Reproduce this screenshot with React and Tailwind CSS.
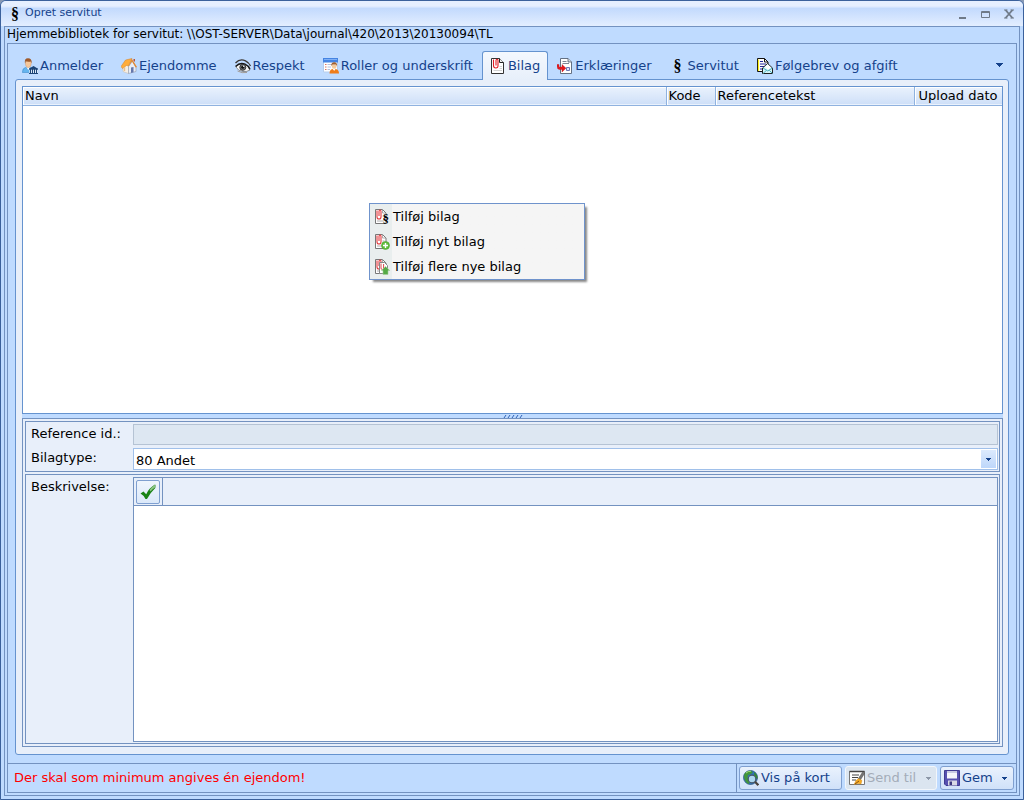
import React from "react";

const Section = () => (
  <span aria-hidden="true" className="flex h-4 w-4 shrink-0 items-center justify-center font-['Liberation_Serif',serif] text-[16px] leading-4 font-bold text-black">§</span>
);

const Icon = ({ children }) => (
  <svg aria-hidden="true" viewBox="0 0 16 16" className="h-4 w-4 shrink-0">{children}</svg>
);

const PersonIcon = () => (
  <Icon>
    <path d="M.4 14.500q0-4.500 3-5l2.600.6 3-.6q2 .5 2 3v2z" fill="#66b5ee" stroke="#3583c4" strokeWidth=".5" />
    <path d="M4.500 9.200h3.500l-1.700 2.800z" fill="#fff" />
    <path d="M3.300 4q0 5.500 3 5.500T9.300 4q-3-3-6 0z" fill="#f6c79b" stroke="#c68a57" strokeWidth=".4" />
    <path d="M3 5.500Q2 .4 6 .3q4 0 3.700 5L8.800 3.400Q6 4 3.800 3.200z" fill="#a05a2a" />
    <path d="M7 10.700L11.500 8l4.500 2.700v.8H7z" fill="#1d4576" />
    <path d="M7.300 11h8.500v4.500H7.300z" fill="#dce9f7" />
    <path d="M8.500 11v4M10.500 11v4M12.500 11v4M14.500 11v4M7 15.500h9M7 11.200h9" stroke="#1d4576" strokeWidth="1" />
  </Icon>
);
const HouseIcon = () => (
  <Icon>
    <path d="M2 8v5.500l5.500 2V8L6 4z" fill="#f6efe5" stroke="#c9b9a5" strokeWidth=".5" />
    <path d="M7.500 8.500l4-5.500 3.500 6v4.500l-7.500 2z" fill="#e9edf6" stroke="#8e98ab" strokeWidth=".6" />
    <path d="M0 8.500L4.500 2 11 .5 7.500 8 5.500 7.500 1.500 10.500z" fill="#ffad3b" stroke="#d2812a" strokeWidth=".5" />
    <path d="M10.800.8L16 9l-1.400.4-3.600-5.800-3.300 4.700z" fill="#e58a31" />
    <path d="M12.500 1h1.500v3l-1.500-1.500z" fill="#b6533b" />
    <path d="M10 9.500l2.500-.6v5.400l-2.500.7z" fill="#6377ad" />
    <path d="M3.500 9v4" stroke="#e8c08c" strokeWidth="1.400" />
  </Icon>
);
const EyeIcon = () => (
  <Icon>
    <path d="M.5 5Q5 0 10.500 2.800 14 4.500 15.500 8" fill="none" stroke="#3c3835" strokeWidth="1.300" />
    <path d="M1 9q4-5 9-2.500 3 1.500 5 5.500-3 2-7 1.500Q3 13 1 9z" fill="#f6f6f6" stroke="#666" strokeWidth=".7" />
    <path d="M.5 8.500Q5 4 10 6.200q3.500 1.500 5 5" fill="none" stroke="#171717" strokeWidth="1.400" />
    <circle cx="7.800" cy="9.300" r="3" fill="#777c80" stroke="#292929" strokeWidth=".9" />
    <circle cx="7.700" cy="9.200" r="1.500" fill="#101010" />
    <circle cx="8.700" cy="8.300" r=".7" fill="#fff" />
    <path d="M2.500 13q4.500 2.500 9.500 1.500" fill="none" stroke="#a19c98" />
  </Icon>
);
const RolesIcon = () => (
  <Icon>
    <path d="M.5.5h14v13.500H.5z" fill="#fff" stroke="#b6cdec" />
    <path d="M0 0h15v4.500H0z" fill="#4584e2" />
    <path d="M1 1h13v1H1z" fill="#80b0f6" />
    <path d="M2 6.500h1.500M2 9h1.500M2 11.500h1.500" stroke="#dc755d" />
    <path d="M4.500 6.500H9M4.500 9H8M4.500 11.500H7" stroke="#b6c1dc" />
    <path d="M8.700 6.500q0 4.500 2.500 4.500t2.500-4.500z" fill="#f5cb9c" />
    <path d="M8.300 8Q8 4.300 11.200 4.300T14 8l-1-1.500H9.500z" fill="#a3602d" />
    <path d="M6.500 15.500q0-4 3-4.500l1.600 1 1.600-1q3.300.5 3.300 4.500z" fill="#ef7d1a" />
    <path d="M9.800 10.800h2.700L11.200 13z" fill="#fff" />
  </Icon>
);
const ClipPageIcon = () => (
  <Icon>
    <path d="M1.500.5H9.500L13.500 4.500V15.500H1.500z" fill="#fff" stroke="#333" strokeWidth="1" />
    <path d="M9.500.5V4.500H13.500" fill="#eee" stroke="#222" strokeWidth="1" />
    <path d="M3.500 12.500h8.500M9.500 8.500H12M9.500 10.500H12" stroke="#c7c7c7" strokeWidth=".8" />
    <path d="M3.500 1.500v6q0 2.500 2.300 2.500T8 7.500V2.500Q8 1.200 7 1.200T6 2.500v5" fill="none" stroke="#e31c23" strokeWidth="1.100" />
  </Icon>
);
const DeclarationIcon = () => (
  <Icon>
    <path d="M3.500.5h7.500L14.500 4v11.500h-11z" fill="#fff" stroke="#647184" strokeWidth="1" />
    <path d="M11 .5V4h3.500" fill="#d3dae5" stroke="#4b586c" strokeWidth=".8" />
    <path d="M5.500 3.500h4M5.500 5.500h6.500" stroke="#7d8796" />
    <path d="M9.500 9.500h3v3h-3z" fill="#dce1fc" stroke="#6c75b1" />
    <path d="M0 6.500h2V9h3V6.500L9 10.200 5 14v-2.500H2.500Q0 11 0 8.500z" fill="#e5191e" stroke="#b81a20" strokeWidth=".4" />
  </Icon>
);
const LetterIcon = () => (
  <Icon>
    <path d="M.5.5H7.500L11 4v9.500H.5z" fill="#fff" stroke="#111" strokeWidth="1" />
    <path d="M7.500.5V4H11" fill="none" stroke="#111" />
    <path d="M3 3.500H6M3 6h6M3 8.500h5M3 11h3" stroke="#23289a" strokeWidth="1.200" />
    <path d="M1.500 1.500v11.500" stroke="#fff21a" strokeWidth="1.200" />
    <path d="M5.500 10L10.500 5.500 15.500 10v5.500H5.500z" fill="#d5f6fa" stroke="#222" />
    <path d="M6 10l4.800 3L15.500 10M6 15.500l3.500-3.200M15.500 15.500l-3.200-3.200" fill="none" stroke="#4fb2be" />
    <path d="M8 9l3-2.500L14 9.500l-3 2z" fill="#fff" />
  </Icon>
);

const clip = "M3 1.500V8q0 2 2 2t2-2V2.500Q7 1 6 1T5 2.500V7";
const MenuClip = ({ kind }) => (
  <Icon>
    <path d="M1.500.5H8.500l3.500 3.500v10.500H1.500z" fill="#fff" stroke="#777" />
    <path d="M8.500.5V4H12M3 12h7M8.500 7h2" fill="none" stroke="#999" strokeWidth=".8" />
    <path d={clip} fill="none" stroke="#e33a3e" strokeWidth="1.100" />
    {kind === "section" && (
      <text x="8.500" y="14" fontSize="13" fontWeight="bold" fontFamily="Liberation Serif, serif" fill="#000">§</text>
    )}
    {kind === "new" && (
      <>
        <circle cx="11.500" cy="11.500" r="4" fill="#62bc3d" stroke="#4ea32f" strokeWidth=".6" />
        <path d="M9 11.500h5M11.500 9v5" stroke="#fff" strokeWidth="1.400" />
      </>
    )}
    {kind === "many" && (
      <>
        <path d="M5.500 3.500H10.500l3 3v8h-8z" fill="#fff" stroke="#888" />
        <path d="M7 4.500v4.500q0 1.500 1.300 1.500T9.600 9V5" fill="none" stroke="#d94a4d" />
        <path d="M11.500 7.500L15.800 11.500H14V15.500H9v-4H7.500z" fill="#55aa46" stroke="#a2cf98" strokeWidth=".6" />
      </>
    )}
  </Icon>
);
const GlobeIcon = () => (
  <Icon>
    <circle cx="7.500" cy="7.500" r="7" fill="#2f74b9" stroke="#254d7b" strokeWidth=".7" />
    <path d="M1 5Q3 .5 8 .8l2 1.700-3 2L5 5l-.5 3L7 10l-1 4Q1 12.500 1 5z" fill="#43963a" />
    <path d="M11 2q4 3 3.500 7l-3-2z" fill="#348a30" />
    <path d="M3 3q2-2 5-1.800" stroke="#a3dc7b" fill="none" />
    <circle cx="9" cy="9" r="3.800" fill="#acd7ef" stroke="#47586a" strokeWidth="1.200" />
    <path d="M12 11.800l3.300 3.300" stroke="#4a443e" strokeWidth="2.200" />
  </Icon>
);
const SendIcon = () => (
  <Icon>
    <path d="M.5 1.500h15v13H.5z" fill="#fff" stroke="#777" />
    <path d="M.5 1.500h15" stroke="#444" strokeWidth="1.500" />
    <path d="M3 5h7M3 7.500h6M3 10h4" stroke="#444" strokeWidth="1.100" />
    <path d="M14 1.500l1.500 2-4.500 7-2-1.500z" fill="#777" stroke="#444" strokeWidth=".5" />
    <path d="M5 14.500l2-4 2.500-2 3.500 2-1 3.500-3-.5z" fill="#f6ab22" stroke="#cb861b" strokeWidth=".4" />
    <path d="M6 14l4-3" stroke="#8b5211" />
  </Icon>
);
const DiskIcon = () => (
  <Icon>
    <path d="M.5.5h15v15H2L.5 14z" fill="#5750b0" stroke="#403a92" />
    <path d="M3 1h10v7.500H3z" fill="#f4f4fb" />
    <path d="M3 1h10v2H3z" fill="#c9cae3" />
    <path d="M4 10.500h9v5H4z" fill="#d9dae5" />
    <path d="M5.500 11.500h2.500V15H5.500z" fill="#3c377e" />
  </Icon>
);
const CheckIcon = () => (
  <Icon>
    <path d="M.5 9.500l3-2 2.700 2.700Q9 4 15 .5q.8 0 .3 3.500Q10 9 7 15H5.500Q4 11.500.5 9.500z" fill="#198316" />
    <path d="M9.500 6Q12 2.500 15 .8v2.800Q12 5.500 10.500 7.500z" fill="#8dc584" />
  </Icon>
);
const Caret = ({ className = "text-[#15428b]" }) => (
  <svg aria-hidden="true" viewBox="0 0 5 3" className={`h-[3px] w-[5px] shrink-0 ${className}`}>
    <path d="M0 0h5v1H4v1H3v1H2V2H1V1H0z" fill="currentColor" />
  </svg>
);

const tabs = [
  ["Anmelder", PersonIcon],
  ["Ejendomme", HouseIcon],
  ["Respekt", EyeIcon],
  ["Roller og underskrift", RolesIcon],
  ["Bilag", ClipPageIcon],
  ["Erklæringer", DeclarationIcon],
  ["Servitut", Section],
  ["Følgebrev og afgift", LetterIcon],
];

function TitleBar() {
  return (
    <header className="flex h-[25px] items-center bg-linear-to-b from-[#e6efff] from-20% via-[#c3dafd] via-30% to-[#e3eeff] pr-1.5 pl-1.5 text-[#15428b]">
      <Section />
      <h1 className="ml-0.5 flex-1 text-[11px]">Opret servitut</h1>
      <div className="flex items-center gap-[7px] text-[#6f7a88]">
        <button aria-label="Minimer" className="flex h-4 w-4 items-center justify-center">
          <svg viewBox="0 0 10 10" className="h-2.5 w-2.5"><path d="M1 8h7v2H1z" fill="currentColor" /></svg>
        </button>
        <button aria-label="Maksimer" className="flex h-4 w-4 items-center justify-center">
          <svg viewBox="0 0 10 10" className="h-2.5 w-2.5"><path d="M.5 2.500h8v6h-8zM.5 3.500h8" fill="none" stroke="currentColor" /></svg>
        </button>
        <button aria-label="Luk" className="flex h-4 w-4 items-center justify-center">
          <svg viewBox="0 0 10 10" className="h-2.5 w-2.5"><path d="M1.500 1l7 8M8.500 1l-7 8" stroke="currentColor" strokeWidth="1.800" /><path d="M0 1h3.500M6.500 1H10M0 9h3.500M6.500 9H10" stroke="currentColor" strokeWidth="1" /></svg>
        </button>
      </div>
    </header>
  );
}

function TabBar() {
  return (
    <div className="flex h-[35px] items-end pr-[7px]">
      <div role="tablist" className="relative -mb-px flex flex-1 items-end pl-[5px]">
        {tabs.map(([label, TabIcon]) => {
          const active = label === "Bilag";
          return (
            <button
              key={label}
              role="tab"
              aria-selected={active}
              className={`flex h-[29px] items-center gap-0.5 whitespace-nowrap text-[#15428b] ${
                active
                  ? "rounded-t-[3px] border border-b-0 border-[#6593cf] bg-linear-to-b from-[#f4f8fe] to-[#e7effa] px-[7px]"
                  : "px-[9px]"
              }`}
            >
              <TabIcon />
              {label}
            </button>
          );
        })}
      </div>
      <button aria-label="Flere faner" className="flex h-7 w-5 items-center justify-center self-end">
        <svg aria-hidden="true" viewBox="0 0 7 4" className="h-1 w-[7px] text-[#15428b]">
          <path d="M0 0h7v1H6v1H5v1H4v1H3V3H2V2H1V1H0z" fill="currentColor" />
        </svg>
      </button>
    </div>
  );
}

const th = "border-r border-[#8fb2df] px-0.5 text-left font-normal shadow-[inset_1px_1px_0_#ffffff]";

function AttachmentTable() {
  return (
    <section className="relative min-h-40 flex-1 basis-[5px] border border-[#6593cf] bg-white">
      <table className="w-full table-fixed border-collapse">
        <thead>
          <tr className="h-[18px] border-b border-[#8fb2df] bg-linear-to-b from-[#eaf2fd] to-[#cfe0f8] leading-[17px]">
            <th className={th}>Navn</th>
            <th className={`${th} w-[49px]`}>Kode</th>
            <th className={`${th} w-[199px]`}>Referencetekst</th>
            <th className="w-[88px] px-1 text-left font-normal whitespace-nowrap shadow-[inset_1px_1px_0_#ffffff]">Upload dato</th>
          </tr>
        </thead>
        <tbody />
      </table>
      <ContextMenu />
    </section>
  );
}

function ContextMenu() {
  const items = [
    ["Tilføj bilag", "section"],
    ["Tilføj nyt bilag", "new"],
    ["Tilføj flere nye bilag", "many"],
  ];
  return (
    <div
      role="menu"
      className="absolute top-[116px] left-[346px] w-[216px] border border-[#6f93cc] bg-linear-to-r from-[#e9eeee] from-[22px] to-[#f5f5f5] to-[22px] shadow-[3px_3px_2px_-1px_#888888]"
    >
      {items.map(([label, kind]) => (
        <button key={label} role="menuitem" className="flex h-[25px] w-full items-center gap-[3px] pl-1 text-left">
          <MenuClip kind={kind} />
          {label}
        </button>
      ))}
    </div>
  );
}

function DetailPanel() {
  return (
    <section className="flex min-h-60 flex-1 basis-0 flex-col gap-0.5 border border-[#7392c0] p-0.5">
      <div className="grid grid-cols-[102px_1fr] gap-x-1 gap-y-[3px] border border-[#7392c0] p-px pt-0.5">
        <label htmlFor="ref" className="pl-1 leading-[19px]">Reference id.:</label>
        <input id="ref" disabled className="h-[21px] w-full border border-[#b5c3d4] bg-[#dde7f2]" />
        <label htmlFor="type" className="pl-1 leading-[19px]">Bilagtype:</label>
        <div className="relative">
          <select id="type" className="block h-[22px] w-full appearance-none border border-[#a0c0ea] bg-white px-0.5 pt-0.5">
            <option>80 Andet</option>
          </select>
          <span className="pointer-events-none absolute inset-y-0.5 right-0.5 flex w-[15px] items-center justify-center bg-linear-to-b from-[#dceafd] to-[#bed7fa]">
            <Caret />
          </span>
        </div>
      </div>
      <div className="grid flex-1 grid-cols-[102px_1fr] gap-x-1 border border-[#7392c0] p-px pt-0.5">
        <label htmlFor="desc" className="pl-1 leading-[19px]">Beskrivelse:</label>
        <div className="flex flex-col border border-[#7392c0]">
          <div className="flex h-7 border-b border-[#7392c0]">
            <div className="flex items-center border-r border-[#7392c0] px-0.5">
              <button aria-label="Godkend" className="flex h-6 w-6 items-center justify-center rounded-[2px] border border-[#7f9fd0] bg-linear-to-b from-[#eff5fd] to-[#dbe8f9]">
                <CheckIcon />
              </button>
            </div>
          </div>
          <textarea id="desc" className="w-full flex-1 resize-none bg-white p-1 outline-none" />
        </div>
      </div>
    </section>
  );
}

const footButton = "flex h-6 items-center gap-0.5 rounded-[3px] border pl-[3px] whitespace-nowrap";
const footActive = "border-[#7f9fd0] bg-linear-to-b from-[#eaf2fd] to-[#d0e1f9] text-[#15428b]";

function StatusBar() {
  return (
    <footer className="flex h-[29px] items-center border-t border-[#7392c0]">
      <p className="flex-1 pl-1.5 text-[#ff0000]">Der skal som minimum angives én ejendom!</p>
      <div className="flex h-full items-center gap-[3px] border-l border-[#7392c0] px-0.5">
        <button className={`${footButton} ${footActive} min-w-[103px]`}>
          <GlobeIcon />
          Vis på kort
        </button>
        <button disabled className={`${footButton} min-w-[92px] border-[#f2f6fb] bg-[#dbe5f0] pr-[5px] text-[#a3acb8]`}>
          <SendIcon />
          Send til
          <Caret className="ml-auto text-[#8d98a8]" />
        </button>
        <button className={`${footButton} ${footActive} min-w-[74px] pr-1.5`}>
          <DiskIcon />
          Gem
          <Caret className="ml-auto text-[#15428b]" />
        </button>
      </div>
    </footer>
  );
}

export default function App() {
  return (
    <div className="min-h-screen bg-[#8899b5]">
      <div className="flex min-h-screen flex-col overflow-hidden rounded-t-[6px] border border-[#3b619c] bg-[#bfdbff] font-['DejaVu_Sans',Verdana,sans-serif] text-[13px] text-black">
        <TitleBar />
        <div className="mx-[3px] mb-[3px] flex flex-1 flex-col border border-[#7392c0] px-0.5 pb-0.5">
          <p className="h-4 text-[12px] leading-[15px]">Hjemmebibliotek for servitut: \\OST-SERVER\Data\journal\420\2013\20130094\TL</p>
          <div className="flex flex-1 flex-col border border-[#7392c0]">
            <TabBar />
            <main className="mx-[7px] mb-2 flex flex-1 flex-col rounded-[3px] border border-[#6593cf] bg-[#e8effa] pt-1.5 pr-[5px] pb-[7px] pl-1.5">
              <AttachmentTable />
              <div role="separator" className="flex h-1 items-center justify-center bg-[#bfdbff]">
                <svg aria-hidden="true" viewBox="0 0 20 3" className="h-[3px] w-5">
                  <path d="M1 3l2-3M5 3l2-3M9 3l2-3M13 3l2-3M17 3l2-3" stroke="#2f62b5" />
                </svg>
              </div>
              <DetailPanel />
            </main>
            <StatusBar />
          </div>
        </div>
      </div>
    </div>
  );
}
